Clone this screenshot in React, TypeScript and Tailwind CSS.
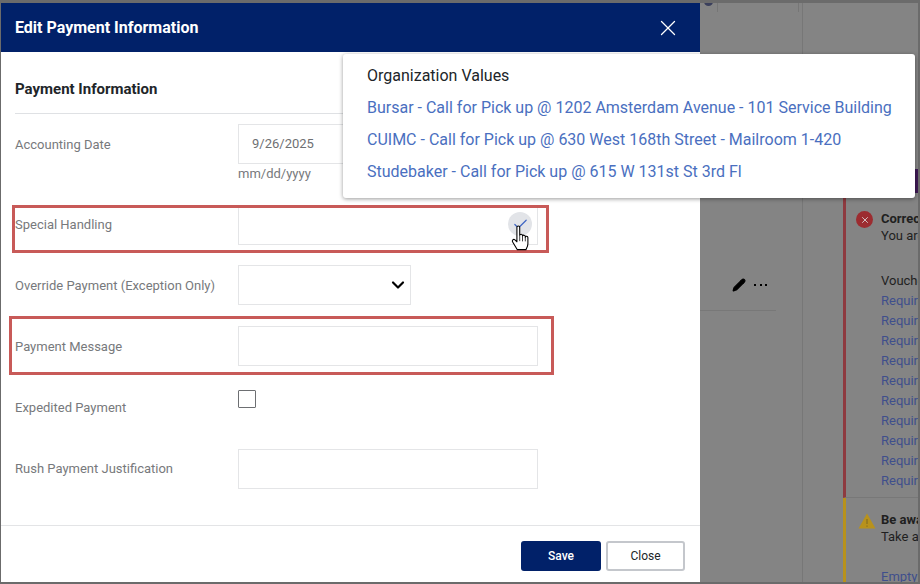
import { ChevronDown, X, Pencil, Check } from "lucide-react";

const requirementRows = [0, 1, 2, 3, 4, 5, 6, 7, 8, 9];

function HandCursor() {
  return (
    <svg width="22" height="28" viewBox="0 0 20 26" className="absolute left-[510px] top-[225px]">
      <path
        d="M6.2 2.2c0-1.6 2.6-1.6 2.6 0v7.4c.2-1.4 2.4-1.4 2.6 0v.8c.2-1.3 2.4-1.3 2.6.1v.8c.3-1.2 2.3-1 2.4.4v5.6c0 2.6-1 4-1.8 5.6H6.6L2.4 16c-1.3-1.8.6-3.4 2-2.2l1.8 1.8z"
        fill="#ffffff"
        stroke="#000000"
        strokeWidth="1"
        strokeLinejoin="round"
      />
      <path d="M8.8 10v5M11.4 10.6v4.6M14 11.2v4" stroke="#000000" strokeWidth="0.7" fill="none" />
    </svg>
  );
}

function BackgroundPage() {
  return (
    <div className="flex-1 flex bg-[#848484] overflow-hidden">
      <div className="w-[103px] shrink-0 border-r border-[#777777]">
        {/* faint table header behind the overlay */}
        <div className="relative h-[9px] flex">
          <div className="w-[18px] border-r border-[#767676]" />
          <div className="w-[81px] border-r border-[#767676]" />
          <span className="absolute left-[4px] -top-[6px] w-[9px] h-[9px] rounded-full bg-[#3a3f5c]" />
        </div>
        <div className="h-[298px] flex items-end justify-end gap-[8px] pr-[35px] pb-[18px]">
          <Pencil size={14} fill="#000000" stroke="#000000" />
          <span className="flex gap-[3.5px] pb-[6px]">
            <i className="w-[2px] h-[2px] bg-black" />
            <i className="w-[2px] h-[2px] bg-black" />
            <i className="w-[2px] h-[2px] bg-black" />
          </span>
        </div>
        <div className="w-[76px] border-t border-[#787878]" />
      </div>
      <div className="w-[40px] shrink-0" />
      <div className="flex-1 flex flex-col pt-[195px] whitespace-nowrap overflow-hidden text-[13px] leading-[17px] text-[#1f1f1f]">
        <div className="h-[300px] shrink-0 border-l-[3px] border-[#8e3a40] border-b border-b-[#787878] pl-[35px] pt-[12px] relative">
          <span className="absolute left-[10px] top-[13px] w-[17px] h-[17px] rounded-full bg-[#9c2c30] flex items-center justify-center">
            <X size={10} stroke="#e0e0e0" strokeWidth={2} />
          </span>
          <p className="font-bold">Correct</p>
          <p>You are</p>
          <p className="mt-[28px] h-[20px]">Voucher</p>
          {requirementRows.map((n) => (
            <p key={n} className="h-[20px] text-[#3f4f8c]">Required</p>
          ))}
        </div>
        <div className="flex-1 border-l-[3px] border-[#b8921c] pl-[35px] pt-[13px] relative">
          <svg width="18" height="16" viewBox="0 0 18 16" className="absolute left-[12px] top-[15px]">
            <path d="M9 0.5 17.5 15.5H0.5z" fill="#b8921c" />
            <path d="M9 6v5M9 12.5v1.2" stroke="#8e7420" strokeWidth="1.4" />
          </svg>
          <p className="font-bold">Be aware</p>
          <p>Take action</p>
          <p className="mt-[23px] text-[#3f4f8c]">Empty</p>
        </div>
      </div>
    </div>
  );
}

function FieldRow({
  label,
  children,
  className,
  labelClass = "leading-[41px]",
}: {
  label: string;
  children?: React.ReactNode;
  className: string;
  labelClass?: string;
}) {
  return (
    <div className={`flex ${className}`}>
      <label className={`w-[223px] shrink-0 text-[13px] text-[#77797c] ${labelClass}`}>{label}</label>
      {children}
    </div>
  );
}

export default function App() {
  return (
    <div
      className="relative w-[920px] h-[584px] overflow-hidden flex bg-[#6b6b6b] pt-[3px] pb-[2px] pl-[1px] pr-[2px]"
      style={{ fontFamily: "Roboto, sans-serif" }}
    >
      {/* Dialog */}
      <div className="w-[699px] shrink-0 flex flex-col bg-white">
        <div className="h-[49px] shrink-0 bg-[#012169] flex items-center justify-between pl-[14px] pr-[19px] text-white">
          <h1 className="text-[16px] font-bold">Edit Payment Information</h1>
          <X size={26} strokeWidth={1.2} />
        </div>

        <div className="flex-1 pl-[14px] pr-[14px] pt-[28px]">
          <h2 className="text-[15px] leading-[18px] font-bold text-[#212529] pb-[15px] border-b border-[#dfe1e4]">
            Payment Information
          </h2>

          <FieldRow label="Accounting Date" className="mt-[10px] h-[40px]">
            <div className="w-[300px] h-[40px] border border-[#e4e5e7] pl-[13px] text-[13px] leading-[38px] text-[#6e7073]">
              9/26/2025
            </div>
          </FieldRow>
          <p className="ml-[223px] mt-[1px] h-[40px] text-[13px] leading-[18px] text-[#77797c]">mm/dd/yyyy</p>

          <FieldRow label="Special Handling" className="h-[40px]" labelClass="leading-[39px]">
            <div className="relative w-[300px] h-[40px] border border-[#e4e5e7]">
              <span className="absolute left-[269px] top-[6px] w-[24px] h-[24px] rounded-full bg-[#e2e4e8] flex items-center justify-center">
                <Check size={17} stroke="#3f66c4" strokeWidth={1.7} />
              </span>
            </div>
          </FieldRow>

          <FieldRow label="Override Payment (Exception Only)" className="mt-[20px] h-[40px]">
            <div className="w-[173px] h-[40px] border border-[#e4e5e7] flex items-center justify-end pr-[2px]">
              <ChevronDown size={20} stroke="#000000" strokeWidth={2.6} />
            </div>
          </FieldRow>

          <FieldRow label="Payment Message" className="mt-[21px] h-[40px]">
            <div className="w-[300px] h-[40px] border border-[#e4e5e7]" />
          </FieldRow>

          <FieldRow label="Expedited Payment" className="mt-[21px] h-[40px]">
            <div className="w-[18px] h-[18px] mt-[3px] border border-[#6d6f72] rounded-[1px]" />
          </FieldRow>

          <FieldRow label="Rush Payment Justification" className="mt-[22px] h-[40px]" labelClass="leading-[39px]">
            <div className="w-[300px] h-[40px] border border-[#e4e5e7]" />
          </FieldRow>
        </div>

        <div className="h-[57px] shrink-0 border-t border-[#e3e4e6] flex justify-end items-start gap-[5px] pt-[15px] pr-[15px] text-[12px]">
          <button className="w-[80px] h-[30px] rounded-[3px] bg-[#012169] text-white font-medium">Save</button>
          <button className="w-[79px] h-[30px] rounded-[3px] border-2 border-[#c4c7cc] bg-white text-[#212529]">Close</button>
        </div>
      </div>

      <BackgroundPage />

      {/* Purple sliver behind the menu */}
      <div className="absolute right-[2px] top-[169px] w-[3px] h-[24px] bg-[#3f1a55]" />

      {/* Red annotation boxes */}
      <div className="absolute left-[12px] top-[205px] w-[537px] h-[48px] border-[3px] border-[#c85a58]" />
      <div className="absolute left-[9px] top-[316px] w-[545px] h-[59px] border-[3px] border-[#c85a58]" />

      {/* Organization values menu */}
      <div className="absolute left-[343px] top-[54px] w-[572px] h-[144px] bg-white rounded-[3px] shadow-[0_1px_4px_rgba(0,0,0,0.4)] pl-[24px] pt-[6px] text-[16px] leading-[32px] whitespace-nowrap">
        <p className="text-[#212529]">Organization Values</p>
        <p className="text-[#4a6fc0]">Bursar - Call for Pick up @ 1202 Amsterdam Avenue - 101 Service Building</p>
        <p className="text-[#4a6fc0]">CUIMC - Call for Pick up @ 630 West 168th Street - Mailroom 1-420</p>
        <p className="text-[#4a6fc0]">Studebaker - Call for Pick up @ 615 W 131st St 3rd Fl</p>
      </div>

      <HandCursor />
    </div>
  );
}
